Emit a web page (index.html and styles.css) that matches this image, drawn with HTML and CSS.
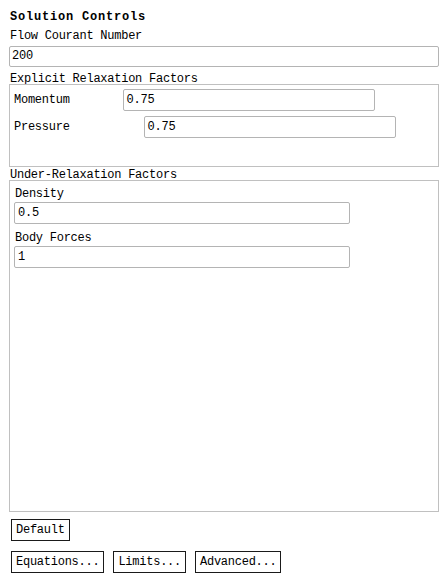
FILE: index.html
```html
<!DOCTYPE html>
<html>
<head>
<meta charset="utf-8">
<link rel="stylesheet" href="styles.css">
</head>
<body>
<div class="panel">
  <div class="title">Solution Controls</div>
  <div class="label label-flow">Flow Courant Number</div>
  <div class="input input-full">200</div>

  <div class="label group-label">Explicit Relaxation Factors</div>
  <div class="group group-explicit">
    <div class="row row-momentum">
      <span class="row-label">Momentum</span>
      <div class="input input-momentum">0.75</div>
    </div>
    <div class="row row-pressure">
      <span class="row-label">Pressure</span>
      <div class="input input-pressure">0.75</div>
    </div>
  </div>

  <div class="label group-label group-label-under">Under-Relaxation Factors</div>
  <div class="group group-under">
    <div class="label inner-label">Density</div>
    <div class="input input-inner">0.5</div>
    <div class="label inner-label inner-label-2">Body Forces</div>
    <div class="input input-inner">1</div>
  </div>

  <div class="buttons buttons-default">
    <div class="btn">Default</div>
  </div>
  <div class="buttons buttons-row">
    <div class="btn">Equations...</div>
    <div class="btn">Limits...</div>
    <div class="btn">Advanced...</div>
  </div>
</div>
</body>
</html>
```

FILE: styles.css
```css
html, body {
  margin: 0;
  padding: 0;
  background: #ffffff;
}

body {
  font-family: "Liberation Mono", "DejaVu Sans Mono", monospace;
  font-size: 12px;
  letter-spacing: -0.25px;
  color: #000000;
}

.panel {
  display: flex;
  flex-direction: column;
  align-items: flex-start;
  padding: 11px 0 0 9px;
  width: 430px;
}

.title {
  font-weight: bold;
  letter-spacing: 0.8px;
  height: 12px;
  line-height: 12px;
  margin-left: 1px;
}

.label {
  height: 12px;
  line-height: 12px;
  white-space: nowrap;
}

.label-flow {
  margin-top: 7px;
  margin-left: 1px;
}

.input {
  box-sizing: border-box;
  height: 22px;
  line-height: 20px;
  border: 1px solid #b4b4b4;
  border-radius: 2px;
  padding: 0 3px;
  background: #ffffff;
  white-space: nowrap;
}

.input-full {
  width: 430px;
  margin-top: 4px;
  height: 21px;
  line-height: 19px;
  padding-left: 2px;
}

.group-label {
  margin-top: 6px;
  margin-left: 1px;
}

.group {
  box-sizing: border-box;
  width: 430px;
  border: 1px solid #c0c0c0;
  margin-top: -1px;
}

.group-explicit {
  height: 83px;
  padding-top: 4px;
}

.row {
  display: flex;
  align-items: center;
}

.row-label {
  margin-left: 4px;
}

.row-pressure {
  margin-top: 5px;
}

.input-momentum {
  width: 252px;
  margin-left: 53px;
}

.input-pressure {
  width: 252px;
  margin-left: 74px;
}

.group-label-under {
  margin-top: 2px;
}

.group-under {
  height: 332px;
  padding: 7px 0 0 4px;
}

.inner-label {
  margin-left: 1px;
}

.inner-label-2 {
  margin-top: 8px;
}

.input-inner {
  width: 336px;
  margin-top: 2px;
}

.buttons {
  display: flex;
  gap: 9px;
  margin-left: 2px;
}

.buttons-default {
  margin-top: 7px;
}

.buttons-row {
  margin-top: 10px;
}

.btn {
  box-sizing: border-box;
  height: 22px;
  line-height: 20px;
  border: 1px solid #1a1a1a;
  padding: 0 4px;
  background: #ffffff;
  white-space: nowrap;
}
```
